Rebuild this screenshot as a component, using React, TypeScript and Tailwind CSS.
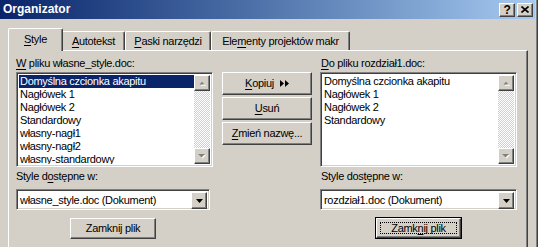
import React from "react";

const raised =
  "border border-t-white border-l-white border-r-[#404040] border-b-[#404040] shadow-[inset_-1px_-1px_#808080]";
const sunken =
  "border border-t-[#808080] border-l-[#808080] border-r-white border-b-white shadow-[inset_1px_1px_#404040,inset_-1px_-1px_#D4D0C8]";

function U({ children }: { children: React.ReactNode }) {
  return <span className="underline underline-offset-[2px] decoration-1">{children}</span>;
}

function ArrowUpDisabled() {
  return (
    <svg width="7" height="5" viewBox="0 0 8 5" className="block">
      <polygon points="4,1 7,4 1,4" fill="#fff" transform="translate(1,1)" />
      <polygon points="3,0 6,3 0,3" fill="#808080" transform="translate(0.5,0.5)" />
    </svg>
  );
}
function ArrowDownDisabled() {
  return (
    <svg width="8" height="5" viewBox="0 0 8 5" className="block">
      <polygon points="1,1 8,1 4.5,4.5" fill="#fff" />
      <polygon points="0,0 7,0 3.5,3.5" fill="#808080" />
    </svg>
  );
}
function ArrowDown() {
  return (
    <svg width="7" height="4" viewBox="0 0 7 4" className="block">
      <polygon points="0,0 7,0 3.5,4" fill="#000" />
    </svg>
  );
}

function ScrollBtn({ up }: { up?: boolean }) {
  return (
    <div className={`w-[16px] h-[16px] bg-[#D4D0C8] flex items-center justify-center ${raised}`}>
      {up ? <ArrowUpDisabled /> : <ArrowDownDisabled />}
    </div>
  );
}

function ListBox({ items, selected }: { items: string[]; selected?: number }) {
  return (
    <div className={`w-[197px] h-[95px] bg-white p-[2px] flex ${sunken}`}>
      <div className="flex-1 flex flex-col overflow-hidden">
        {items.map((it, i) => (
          <div
            key={i}
            className={`h-[13px] leading-[13px] pl-[1px] whitespace-nowrap ${
              i === selected ? "bg-[#0A246A] text-white" : "text-black"
            }`}
          >
            {it}
          </div>
        ))}
      </div>
      <div className="w-[16px] flex flex-col bg-[repeating-conic-gradient(#ffffff_0_25%,#D4D0C8_0_50%)] bg-[length:2px_2px]">
        <ScrollBtn up />
        <div className="flex-1" />
        <ScrollBtn />
      </div>
    </div>
  );
}

function Combo({ text, w }: { text: string; w: string }) {
  return (
    <div className={`${w} h-[21px] bg-white p-[2px] flex ${sunken}`}>
      <div className="flex-1 leading-[17px] pl-[1px] whitespace-nowrap">{text}</div>
      <div className={`w-[16px] h-[17px] bg-[#D4D0C8] flex items-center justify-center ${raised}`}>
        <ArrowDown />
      </div>
    </div>
  );
}

function Btn({ children, w = "w-[90px]", h = "h-[23px]" }: { children: React.ReactNode; w?: string; h?: string }) {
  return (
    <div className={`${w} ${h} bg-[#D4D0C8] flex items-center justify-center ${raised}`}>{children}</div>
  );
}

function Tri() {
  return (
    <svg width="9" height="7" viewBox="0 0 9 7" className="inline-block ml-[6px]">
      <polygon points="0,0 4,3.5 0,7" fill="#000" />
      <polygon points="5,0 9,3.5 5,7" fill="#000" />
    </svg>
  );
}

export default function App() {
  return (
    <div className="w-[538px] h-[247px] overflow-hidden bg-[#D4D0C8] text-[11px] tracking-[-0.3px] text-black font-['Liberation_Sans',Arial,sans-serif]">
      <div className="w-[538px] h-[247px] border-r border-r-[#404040] shadow-[inset_-1px_0_#808080] flex flex-col">
        {/* title bar */}
        <div className="h-[19px] mr-[2px] bg-linear-to-r from-[#0A246A] to-[#A6CAF0] flex items-center pl-[3px] pr-[2px]">
          <div className="flex-1 text-white font-bold text-[12px] tracking-normal leading-[19px]">Organizator</div>
          <div className={`w-[16px] h-[14px] bg-[#D4D0C8] flex items-center justify-center font-bold text-[12px] leading-none ${raised}`}>
            ?
          </div>
          <div className={`w-[16px] h-[14px] ml-[2px] bg-[#D4D0C8] flex items-center justify-center ${raised}`}>
            <svg width="8" height="7" viewBox="0 0 8 7">
              <path d="M0.5 0.5 L7.5 6.5 M7.5 0.5 L0.5 6.5" stroke="#000" strokeWidth="1.6" />
            </svg>
          </div>
        </div>

        {/* tabs */}
        <div className="mt-[9px] ml-[8px] flex items-end h-[22px] relative z-10">
          <div className="w-[55px] h-[23px] -mb-[1px] bg-[#D4D0C8] border-l border-t border-white border-r border-r-[#404040] shadow-[inset_-1px_0_#808080] rounded-t-[2px] flex items-start justify-center pt-[4px] leading-[13px]">
            <span>
              <U>S</U>tyle
            </span>
          </div>
          <div className="w-[62px] h-[19px] border-t border-white border-r border-r-[#404040] shadow-[inset_-1px_0_#808080] rounded-tr-[2px] flex items-start justify-center pt-[3px] leading-[13px]">
            <span>
              <U>A</U>utotekst
            </span>
          </div>
          <div className="w-[86px] h-[19px] border-l border-t border-white border-r border-r-[#404040] shadow-[inset_-1px_0_#808080] rounded-t-[2px] flex items-start justify-center pt-[3px] leading-[13px]">
            <span>
              <U>P</U>aski narzędzi
            </span>
          </div>
          <div className="w-[139px] h-[19px] border-l border-t border-white border-r border-r-[#404040] shadow-[inset_-1px_0_#808080] rounded-t-[2px] flex items-start justify-center pt-[3px] leading-[13px] whitespace-nowrap">
            <span>
              Ele<U>m</U>enty projektów makr
            </span>
          </div>
        </div>

        {/* panel */}
        <div className="ml-[8px] w-[520px] h-[220px] shrink-0 border-l border-t border-white border-r border-r-[#404040] shadow-[inset_-1px_0_#808080] flex pl-[7px] pt-[6px]">
          {/* left column */}
          <div className="w-[197px] flex flex-col">
            <div className="leading-[13px] h-[13px]">
              <U>W</U> pliku własne_style.doc:
            </div>
            <div className="mt-[2px]">
              <ListBox
                selected={0}
                items={[
                  "Domyślna czcionka akapitu",
                  "Nagłówek 1",
                  "Nagłówek 2",
                  "Standardowy",
                  "własny-nagł1",
                  "własny-nagł2",
                  "własny-standardowy",
                ]}
              />
            </div>
            <div className="mt-[3px] leading-[13px] h-[13px]">
              Style d<U>o</U>stępne w:
            </div>
            <div className="mt-[6px]">
              <Combo text="własne_style.doc (Dokument)" w="w-[194px]" />
            </div>
            <div className="mt-[8px] flex justify-center pr-[3px]">
              <Btn w="w-[86px]" h="h-[21px]">Zamknij plik</Btn>
            </div>
          </div>

          {/* middle column */}
          <div className="ml-[9px] pt-[15px] flex flex-col gap-[2px]">
            <Btn>
              <span className="flex items-center">
                <U>K</U>opiuj
                <Tri />
              </span>
            </Btn>
            <Btn>
              <span>
                <U>U</U>suń
              </span>
            </Btn>
            <Btn>
              <span>
                <U>Z</U>mień nazwę...
              </span>
            </Btn>
          </div>

          {/* right column */}
          <div className="ml-[8px] w-[197px] flex flex-col">
            <div className="leading-[13px] h-[13px] pl-[1px]">
              <U>D</U>o pliku rozdział1.doc:
            </div>
            <div className="mt-[2px]">
              <ListBox items={["Domyślna czcionka akapitu", "Nagłówek 1", "Nagłówek 2", "Standardowy"]} />
            </div>
            <div className="mt-[3px] leading-[13px] h-[13px] pl-[1px]">
              Style dos<U>t</U>ępne w:
            </div>
            <div className="mt-[6px]">
              <Combo text="rozdział1.doc (Dokument)" w="w-[197px]" />
            </div>
            <div className="mt-[7px] flex justify-center">
              <div className="w-[87px] h-[22px] border border-black">
                <div className="w-full h-full bg-[#D4D0C8] border border-t-white border-l-white border-r-[#404040] border-b-[#404040] shadow-[inset_-1px_-1px_#808080] p-[3px]">
                  <div className="w-full h-full border border-dotted border-black flex items-center justify-center leading-none">
                    <span>
                      Zamk<U>n</U>ij plik
                    </span>
                  </div>
                </div>
              </div>
            </div>
          </div>
        </div>
      </div>
    </div>
  );
}
